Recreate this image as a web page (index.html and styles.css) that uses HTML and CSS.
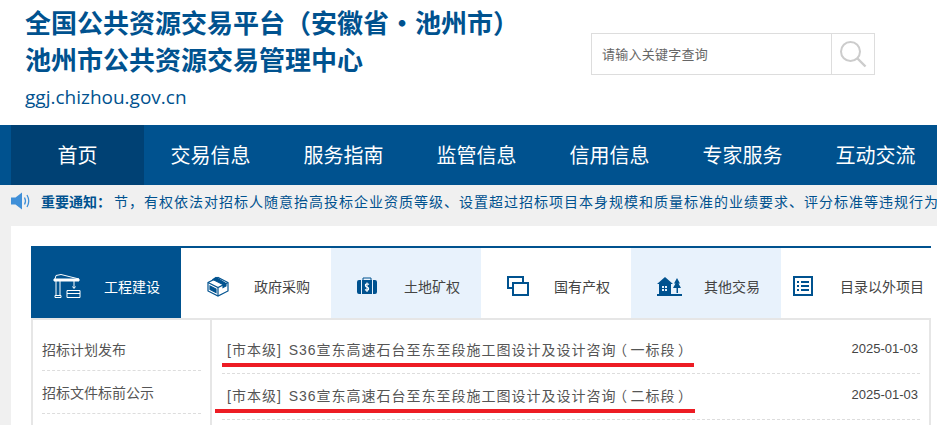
FILE: index.html
```html
<!DOCTYPE html>
<html lang="zh-CN">
<head>
    <meta charset="UTF-8">
    <meta name="viewport" content="width=device-width, initial-scale=1.0">
    <title>全国公共资源交易平台（安徽省·池州市）</title>
    <link rel="stylesheet" href="styles.css">
</head>
<body>

<!-- 头部 -->
<div class="header">
    <div class="brand">
        <h1>全国公共资源交易平台（安徽省・池州市）</h1>
        <h1>池州市公共资源交易管理中心</h1>
        <p class="domain">ggj.chizhou.gov.cn</p>
    </div>
    <div class="search">
        <span class="search-text">请输入关键字查询</span>
        <span class="search-btn">
            <svg width="28" height="28" viewBox="0 0 28 28" fill="none" stroke="#ccc">
                <circle cx="11.5" cy="11.5" r="9.5" stroke-width="2"/>
                <path d="M18.5 18.5 L26.5 26.5" stroke-width="2.4"/>
            </svg>
        </span>
    </div>
</div>

<!-- 导航 -->
<div class="nav">
    <a class="nav-item active">首页</a>
    <a class="nav-item">交易信息</a>
    <a class="nav-item">服务指南</a>
    <a class="nav-item">监管信息</a>
    <a class="nav-item">信用信息</a>
    <a class="nav-item">专家服务</a>
    <a class="nav-item">互动交流</a>
</div>

<!-- 通知 -->
<div class="notice">
    <svg class="notice-icon" width="21" height="18" viewBox="0 0 21 18">
        <path d="M0 5.500H4.500L11 0.500V17.500L4.500 12.500H0Z" fill="#3f8fd8"/>
        <path d="M13.500 5.500Q15.500 9 13.500 12.500M16 3Q19.500 9 16 15" fill="none" stroke="#3f8fd8" stroke-width="1.300"/>
    </svg>
    <b class="notice-label">重要通知：</b>
    <span class="notice-text">节，有权依法对招标人随意抬高投标企业资质等级、设置超过招标项目本身规模和质量标准的业绩要求、评分标准等违规行为</span>
</div>

<div class="panel">
    <div class="tabs">
        <a class="tab active">
            <svg class="tab-icon" width="28" height="24" viewBox="0 0 28 24" fill="none" stroke="#fff" stroke-width="1">
                <path d="M1 5H26V7H1Z" fill="#fff"/>
                <path d="M2 5L3 1.500L8 0.500L26 5M3 7V21M7 7V21M2 21.500H8V23.500H2Z"/>
                <path d="M21 7V14M19.500 12.500L21 14.500L22.500 12.500"/>
                <path d="M14 16.500H27V23.500H14ZM14 19.500H27"/>
            </svg>
            <span>工程建设</span>
        </a>
        <a class="tab">
            <svg class="tab-icon" width="22" height="21" viewBox="0 0 22 21" fill="none" stroke="#00528f" stroke-width="1.200">
                <path d="M1 6.500L11 1.500L21 6.500V15L11 20L1 15Z"/>
                <path d="M1 6.500L11 11.500L21 6.500M11 11.500V20"/>
                <path d="M6 3.500L16 8.500V11.500L19 10V7.500L9 1.500Z" fill="#00528f"/>
                <path d="M3 10L9 13V16.500L3 13.500Z" fill="#00528f"/>
            </svg>
            <span>政府采购</span>
        </a>
        <a class="tab light">
            <svg class="tab-icon" width="20" height="18" viewBox="0 0 20 18">
                <path d="M2 3H4V17H2Q0 17 0 15V5Q0 3 2 3ZM16 3H18Q20 3 20 5V15Q20 17 18 17H16Z" fill="#00528f"/>
                <path d="M5 3H15V17H5Z" fill="#00528f"/>
                <path d="M6 3V1H14V3" fill="none" stroke="#00528f" stroke-width="1"/>
                <path d="M12 7.500Q10 6 8.500 7.500Q8 9.500 10 10Q12 10.500 11.500 12.500Q10 14 8 12.500M10 5.500V15" fill="none" stroke="#fff" stroke-width="1.100"/>
            </svg>
            <span>土地矿权</span>
        </a>
        <a class="tab">
            <svg class="tab-icon" width="22" height="20" viewBox="0 0 22 20" fill="none" stroke="#00528f" stroke-width="2">
                <path d="M16 6V1H1V12H6"/>
                <path d="M6 7H21V19H6Z"/>
            </svg>
            <span>国有产权</span>
        </a>
        <a class="tab light">
            <svg class="tab-icon" width="25" height="19" viewBox="0 0 25 19" fill="#00528f">
                <path d="M8 0L16 7H14V17H2V7H0Z"/>
                <path d="M20 1L23 6.500H21.500L24 11H21V16H19.500V11H16L18.500 6.500H17Z"/>
                <path d="M0 17H25V19H0Z"/>
                <path d="M5 9H7V11H5ZM8 9H10V11H8ZM5 12H7V14H5ZM8 12H10V14H8Z" fill="#e8f2fc"/>
            </svg>
            <span>其他交易</span>
        </a>
        <a class="tab last">
            <svg class="tab-icon" width="20" height="20" viewBox="0 0 20 20" fill="#00528f">
                <path d="M1 1H19V19H1Z" fill="none" stroke="#00528f" stroke-width="2"/>
                <path d="M4 5H6V7H4ZM8 5H16V7H8ZM4 9H6V11H4ZM8 9H16V11H8ZM4 13H6V15H4ZM8 13H16V15H8Z"/>
            </svg>
            <span>目录以外项目</span>
        </a>
    </div>
    <div class="content">
        <ul class="side">
            <li>招标计划发布</li>
            <li>招标文件标前公示</li>
        </ul>
        <ul class="list">
            <li class="row">
                <span class="row-title">[市本级] S36宣东高速石台至东至段施工图设计及设计咨询<span class="paren">（</span>一标段<span class="paren">）</span></span>
                <span class="row-date">2025-01-03</span>
                <i class="mark mark-first"></i>
            </li>
            <li class="row">
                <span class="row-title">[市本级] S36宣东高速石台至东至段施工图设计及设计咨询<span class="paren">（</span>二标段<span class="paren">）</span></span>
                <span class="row-date">2025-01-03</span>
                <i class="mark mark-second"></i>
            </li>
        </ul>
    </div>
</div>

</body>
</html>
```

FILE: styles.css
```css
* {
    margin: 0;
    padding: 0;
    box-sizing: border-box;
}
html, body {
    height: 425px;
    overflow: hidden;
}
body {
    width: 937px;
    background-color: #f0f0f0;
    font-family: "Liberation Sans", "Noto Sans CJK SC", sans-serif;
    color: #333;
}
ul {
    list-style: none;
}
.header {
    height: 125px;
    background-color: #fff;
    display: flex;
    justify-content: space-between;
    padding: 0 62px 0 25px;
}
h1 {
    font-size: 26px;
    line-height: 37px;
    font-weight: bold;
    color: #00528f;
    white-space: nowrap;
}
.brand {
    padding-top: 6px;
}
.domain {
    font-family: "Open Sans", sans-serif;
    font-size: 19px;
    line-height: 24px;
    margin-top: 5px;
    color: #00528f;
}
.search {
    width: 284px;
    height: 42px;
    margin-top: 33px;
    border: 1px solid #ddd;
    display: flex;
    align-items: center;
    justify-content: space-between;
}
.search-text {
    font-size: 13px;
    letter-spacing: 0.25px;
    color: #666;
    padding: 0 0 2px 10px;
}
.search-btn {
    width: 43px;
    height: 40px;
    border-left: 1px solid #ddd;
    display: flex;
    align-items: center;
    justify-content: center;
}
.nav {
    height: 60px;
    background-color: #00528f;
    display: flex;
    padding-left: 11px;
}
.nav-item {
    flex: none;
    width: 133px;
    line-height: 62px;
    text-align: center;
    font-size: 20px;
    color: #fff;
}
.nav-item.active {
    background-color: #004174;
}
.notice {
    height: 41px;
    display: flex;
    align-items: center;
    padding: 0 0 10px 11px;
    font-size: 14px;
    color: #00528f;
    white-space: nowrap;
    overflow: hidden;
}
.notice-icon {
    flex: none;
}
.notice-label {
    flex: none;
    margin-left: 9px;
    width: 73px;
    font-size: 14px;
}
.notice-text {
    letter-spacing: 1px;
}
.panel {
    margin-left: 11px;
    height: 199px;
    background-color: #fff;
    padding: 20px 0 0 20px;
}
.tabs {
    width: 900px;
    height: 74px;
    display: flex;
    border-top: 2px solid #00528f;
    border-bottom: 2px solid #e6e6e6;
}
.tab {
    flex: none;
    width: 150px;
    height: 70px;
    display: flex;
    align-items: center;
    font-size: 14px;
    color: #444;
    padding: 6px 0 0 26px;
    position: relative;
}
.tab span {
    position: absolute;
    left: 73px;
    white-space: nowrap;
}
.tab.active {
    background-color: #00528f;
    color: #fff;
    height: 72px;
    margin-top: -2px;
    padding: 8px 0 0 22px;
}
.tab.light {
    background-color: #e8f2fc;
}
.tab.last {
    padding-left: 12px;
}
.tab.last span {
    left: 59px;
}
.content {
    display: flex;
    width: 900px;
    height: 110px;
    border-left: 2px solid #e6e6e6;
    border-right: 2px solid #e6e6e6;
}
.side {
    width: 179px;
    flex: none;
    border-right: 2px solid #e6e6e6;
    padding: 8px 9px 0 9px;
}
.side li {
    height: 43px;
    line-height: 44px;
    font-size: 14px;
    color: #555;
    border-bottom: 1px dashed #ddd;
}
.list {
    flex: 1;
    padding: 8px 9px 0 10px;
}
.row {
    position: relative;
    height: 46px;
    display: flex;
    justify-content: space-between;
    align-items: center;
    border-bottom: 1px dashed #ddd;
    font-size: 13px;
    color: #444;
    padding: 0 2px 4px 5px;
}
.row-title {
    font-size: 14px;
    letter-spacing: 1px;
    word-spacing: 2px;
    white-space: nowrap;
    color: #555;
}
.paren {
    font-feature-settings: "palt";
    margin: 0 3px;
}
.mark {
    position: absolute;
    height: 4px;
    background-color: #ed1c24;
}
.mark-first {
    left: 0;
    top: 35px;
    width: 472px;
}
.mark-second {
    left: -7px;
    top: 35px;
    width: 480px;
}
```
